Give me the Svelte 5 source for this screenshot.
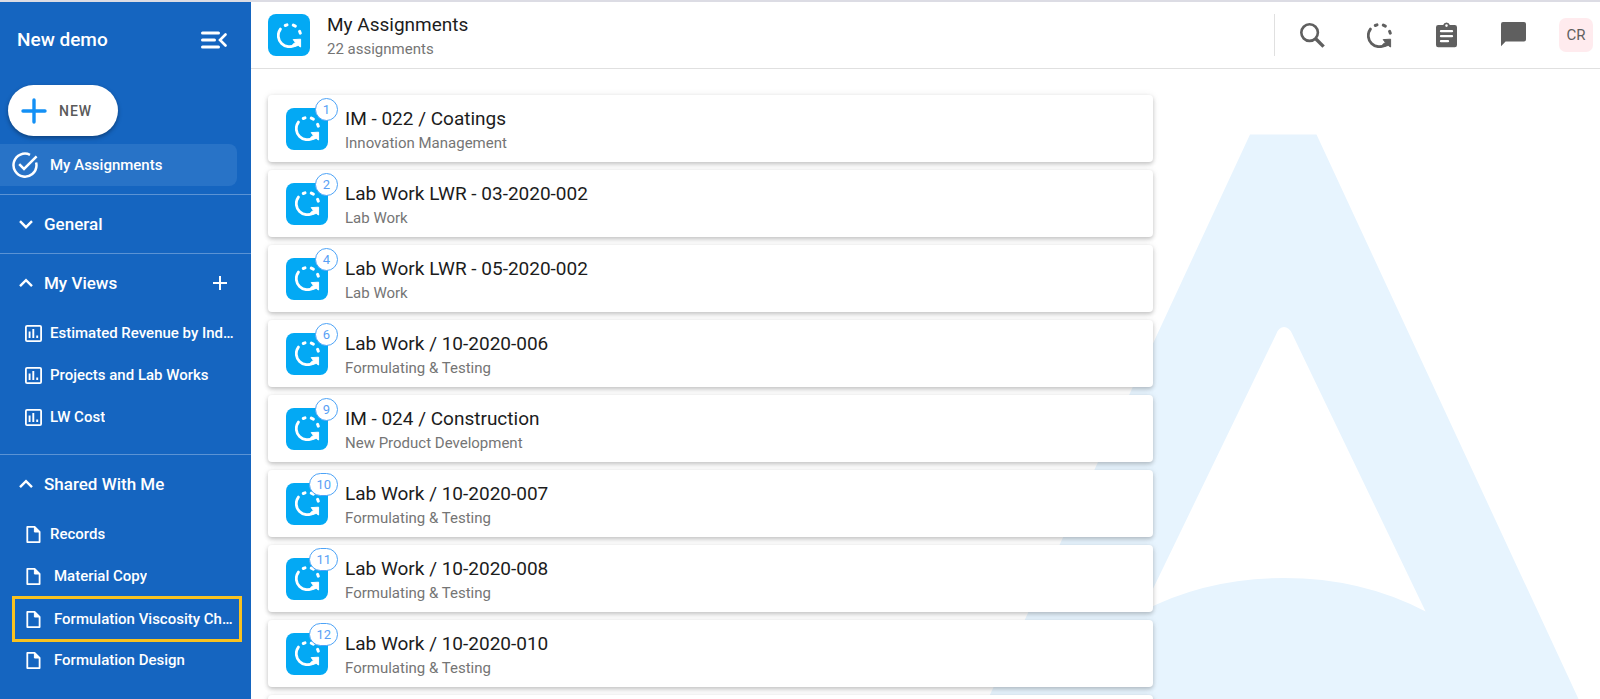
<script>
  const views = ['Estimated Revenue by Ind…', 'Projects and Lab Works', 'LW Cost'];
  const shared = [
    { name: 'Records' },
    { name: 'Material Copy', nested: true },
    { name: 'Formulation Viscosity Ch…', nested: true, marked: true },
    { name: 'Formulation Design', nested: true }
  ];
  const assignments = [
    { n: 1, title: 'IM - 022 / Coatings', type: 'Innovation Management' },
    { n: 2, title: 'Lab Work LWR - 03-2020-002', type: 'Lab Work' },
    { n: 4, title: 'Lab Work LWR - 05-2020-002', type: 'Lab Work' },
    { n: 6, title: 'Lab Work / 10-2020-006', type: 'Formulating & Testing' },
    { n: 9, title: 'IM - 024 / Construction', type: 'New Product Development' },
    { n: 10, title: 'Lab Work / 10-2020-007', type: 'Formulating & Testing' },
    { n: 11, title: 'Lab Work / 10-2020-008', type: 'Formulating & Testing' },
    { n: 12, title: 'Lab Work / 10-2020-010', type: 'Formulating & Testing' }
  ];
</script>

{#snippet cycle()}
  <svg class="cycle" viewBox="0 0 25 25" aria-hidden="true">
    <g fill="none" stroke="currentColor" stroke-width="2.8" stroke-linecap="round">
      <path d="M3.4 6.1A11.1 11.1 0 0 0 18.9 21.6" />
      <path d="M8.3 2.5L10 1.9M16.3 2.1L18.3 3.1M22.6 8.3L23.3 10.2" stroke-width="3" />
    </g>
    <path d="M16.2 16.6L23.6 16.2V24L21.2 22.4L17.5 23.6L15.6 21.6L18.4 19.4Z" fill="currentColor" stroke="currentColor" stroke-width="1" stroke-linejoin="round" />
  </svg>
{/snippet}

{#snippet chevron(up)}
  <svg class="chevron" viewBox="0 0 16 16" aria-hidden="true">
    <path d={up ? 'M2 11.2L8 5.2L14 11.2' : 'M2 5.2L8 11.2L14 5.2'} fill="none" stroke="currentColor" stroke-width="2.4" />
  </svg>
{/snippet}

<div class="app">
  <aside>
    <div class="brand">
      <span>New demo</span>
      <button class="plain" aria-label="Collapse menu">
        <svg width="26" height="18" viewBox="0 0 26 18" fill="none" stroke="currentColor" stroke-width="3" stroke-linecap="round">
          <path d="M1.5 2H17.5M1.5 9H13.5M1.5 16H17.5" />
          <path d="M24.5 3.5L19 9L24.5 14.5" stroke-width="2.6" />
        </svg>
      </button>
    </div>
    <button class="new">
      <svg width="26" height="26" viewBox="0 0 26 26" fill="none" stroke="#1390f5" stroke-width="3.4" stroke-linecap="round">
        <path d="M13 2V24M2 13H24" />
      </svg>
      NEW
    </button>
    <a class="mine" href="#assignments">
      <svg width="26" height="26" viewBox="0 0 26 26" fill="none" stroke="currentColor" stroke-width="2.5">
        <path d="M18 2.8A11.5 11.5 0 1 0 24.5 13.4C24.5 12.3 24.4 11.5 24.1 10.5" />
        <path d="M7.2 12.2L12 17L24.6 4.4" />
      </svg>
      My Assignments
    </a>

    <section>
      <button class="group">{@render chevron(false)}General</button>
    </section>

    <section>
      <div class="grouprow">
        <button class="group">{@render chevron(true)}My Views</button>
        <button class="plain add" aria-label="Add view">
          <svg width="14" height="14" viewBox="0 0 14 14" stroke="currentColor" stroke-width="2"><path d="M7 0V14M0 7H14" /></svg>
        </button>
      </div>
      <nav class="views">
        {#each views as view}
          <a href="#view">
            <svg width="17" height="17" viewBox="0 0 17 17" fill="none" stroke="currentColor">
              <rect x="0.9" y="0.9" width="15.2" height="15.2" rx="1.2" stroke-width="1.8" />
              <path d="M4.6 6.5V13M8.3 4V13M12.2 10.6V13" stroke-width="1.9" />
            </svg>
            <span>{view}</span>
          </a>
        {/each}
      </nav>
    </section>

    <section>
      <button class="group">{@render chevron(true)}Shared With Me</button>
      <nav>
        {#each shared as item}
          <a href="#shared" class:nested={item.nested} class:marked={item.marked}>
            <svg width="17" height="17" viewBox="0 0 17 17" fill="none" stroke="currentColor" stroke-width="1.8" stroke-linejoin="round">
              <path d="M2.3 0.9H9.6L14.6 5.9V16.1H2.3Z" />
              <path d="M9.4 1V6H14.6Z" fill="currentColor" stroke-width="1" />
            </svg>
            <span>{item.name}</span>
          </a>
        {/each}
      </nav>
    </section>
  </aside>

  <main>
    <header>
      <div class="tile">{@render cycle()}</div>
      <div class="text">
        <h1>My Assignments</h1>
        <p>22 assignments</p>
      </div>
      <div class="tools">
        <button aria-label="Search">
          <svg width="25" height="25" viewBox="0 0 25 25" fill="none" stroke="currentColor">
            <circle cx="9.6" cy="9.6" r="8.3" stroke-width="2.6" />
            <path d="M15.2 15.2L23.6 23.6" stroke-width="3.4" />
          </svg>
        </button>
        <button aria-label="Assignments">{@render cycle()}</button>
        <button aria-label="Tasks">
          <svg width="21" height="26" viewBox="0 0 21 26">
            <path fill="currentColor" fill-rule="evenodd" d="M2.2 3H7.2A3.4 3.4 0 0 1 13.8 3H18.8A2.2 2.2 0 0 1 21 5.2V23A2.2 2.2 0 0 1 18.8 25.2H2.2A2.2 2.2 0 0 1 0 23V5.2A2.2 2.2 0 0 1 2.2 3ZM10.5 2.3A1.3 1.3 0 1 0 10.5 4.9A1.3 1.3 0 1 0 10.5 2.3Z" />
            <path d="M5 9.2H16M5 14.2H16M5 19.2H12" stroke="#fff" stroke-width="2.3" stroke-linecap="round" />
          </svg>
        </button>
        <button aria-label="Messages">
          <svg width="25" height="26" viewBox="0 0 25 26">
            <path fill="currentColor" d="M2 0H23A2 2 0 0 1 25 2V17.5A2 2 0 0 1 23 19.5H4.6L0 24.2V2A2 2 0 0 1 2 0Z" />
          </svg>
        </button>
        <button class="user" aria-label="Account CR">CR</button>
      </div>
    </header>

    <div class="content">
      <svg class="mark" width="640" height="565" viewBox="960 134 640 565" aria-hidden="true">
        <path fill="#e7f4fe" fill-rule="evenodd" d="M1250 134.5H1316.5L1578.5 699H988ZM1276.5 333.5L1142 611.5Q1206 578 1284 578Q1362 578 1425.6 611.5L1292 333.5Q1289 327 1284 327Q1279 327 1276.5 333.5Z" />
      </svg>
      <ul>
        {#each assignments as a}
          <li>
            <div class="tile">{@render cycle()}<span class="badge">{a.n}</span></div>
            <div class="text">
              <h2>{a.title}</h2>
              <p>{a.type}</p>
            </div>
          </li>
        {/each}
        <li aria-hidden="true"></li>
      </ul>
    </div>
  </main>
</div>

<style>
  :global(body) {
    margin: 0;
    background: #fff;
  }
  .app {
    box-sizing: border-box;
    display: grid;
    grid-template-columns: 251px 1fr;
    height: 100vh;
    overflow: hidden;
    border-top: 2px solid #dcdce4;
    font-family: Roboto, sans-serif;
    color: #1c1c1c;
  }
  button {
    padding: 0;
    border: 0;
    background: none;
    color: inherit;
    font: inherit;
    cursor: pointer;
  }
  a {
    color: inherit;
    text-decoration: none;
  }
  svg {
    display: block;
    flex: none;
  }
  h1, h2, p, ul {
    margin: 0;
    padding: 0;
  }

  aside {
    background: #1565c0;
    color: #fff;
    font-size: 15px;
    font-weight: 500;
    overflow: hidden;
  }
  .brand {
    display: flex;
    align-items: center;
    justify-content: space-between;
    height: 75px;
    padding: 0 24px 0 17px;
    font-size: 19px;
  }
  .new {
    display: flex;
    align-items: center;
    gap: 12px;
    height: 51px;
    margin: 8px;
    padding: 0 26px 0 13px;
    border-radius: 26px;
    background: #fff;
    color: #5a5a5a;
    font-size: 14px;
    letter-spacing: 1px;
    box-shadow: 0 2px 4px rgba(0, 0, 0, 0.35);
  }
  .mine {
    display: flex;
    align-items: center;
    gap: 12px;
    height: 42px;
    margin: 0 14px 8px 0;
    padding-left: 12px;
    border-radius: 0 8px 8px 0;
    background: #2873c7;
  }
  section {
    border-top: 1px solid #5b93d4;
  }
  .group {
    display: flex;
    align-items: center;
    gap: 10px;
    height: 58px;
    padding-left: 18px;
    font-size: 17px;
  }
  .grouprow {
    display: flex;
    align-items: center;
    justify-content: space-between;
    padding-right: 24px;
  }
  .chevron {
    width: 16px;
    height: 16px;
  }
  nav a {
    box-sizing: border-box;
    display: flex;
    align-items: center;
    gap: 8px;
    height: 42px;
    padding: 0 8px 0 25px;
  }
  nav a span {
    overflow: hidden;
    white-space: nowrap;
    text-overflow: ellipsis;
  }
  nav .nested {
    gap: 12px;
  }
  nav .marked {
    height: 46px;
    margin: -1px 9px -3px 12px;
    padding: 0 0 0 10px;
    border: 3px solid #f9c21f;
  }
  .views {
    padding-bottom: 16px;
  }

  main {
    display: flex;
    flex-direction: column;
    min-width: 0;
    min-height: 0;
  }
  header {
    display: flex;
    align-items: center;
    gap: 17px;
    height: 66px;
    padding: 0 7px 0 17px;
    border-bottom: 1px solid #e0e0e0;
  }
  .tile {
    position: relative;
    display: grid;
    place-items: center;
    flex: none;
    width: 42px;
    height: 42px;
    border-radius: 8px;
    background: #03a9f4;
    color: #fff;
  }
  .cycle {
    width: 25px;
    height: 25px;
  }
  .text {
    padding-top: 4px;
  }
  h1, h2 {
    font-size: 19px;
    font-weight: 400;
    line-height: 24px;
  }
  p {
    font-size: 15px;
    line-height: 24px;
    color: #757575;
  }
  .tools {
    display: flex;
    align-items: center;
    gap: 25px;
    height: 42px;
    margin-left: auto;
    padding-left: 16px;
    border-left: 1px solid #e0e0e0;
    color: #5f5f5f;
  }
  .tools button {
    display: grid;
    place-items: center;
    width: 42px;
    height: 42px;
  }
  .tools .user {
    width: 34px;
    height: 34px;
    border-radius: 7px;
    background: #ffebee;
    font-size: 15px;
  }
  .content {
    position: relative;
    flex: 1;
    min-height: 0;
    padding: 26px 17px 0;
    overflow: hidden;
  }
  .mark {
    position: absolute;
    right: 0;
    bottom: 0;
  }
  ul {
    position: relative;
    display: grid;
    gap: 8px;
    max-width: 885px;
    list-style: none;
  }
  li {
    box-sizing: border-box;
    display: flex;
    align-items: center;
    gap: 17px;
    height: 67px;
    padding-left: 18px;
    border-radius: 4px;
    background: #fff;
    box-shadow: 0 2px 4px rgba(0, 0, 0, 0.22), 0 0 8px rgba(0, 0, 0, 0.06);
  }
  .badge {
    position: absolute;
    top: -10px;
    right: -10px;
    box-sizing: border-box;
    min-width: 23px;
    height: 23px;
    padding: 0 6px;
    border: 1px solid #4da3f7;
    border-radius: 12px;
    background: #fff;
    color: #5a9ff5;
    font-size: 13px;
    line-height: 21px;
    text-align: center;
  }
</style>
